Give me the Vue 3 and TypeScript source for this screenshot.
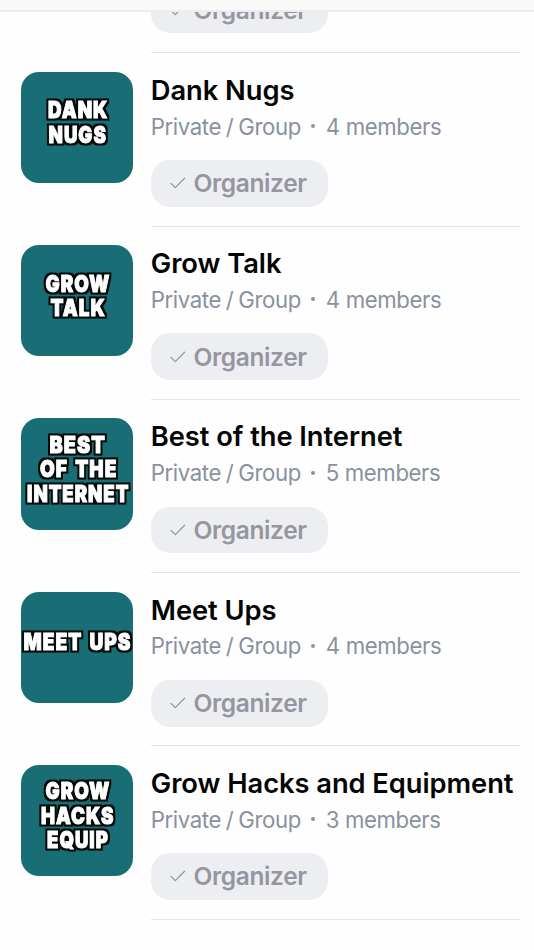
<script setup lang="ts">
interface LogoLine {
  text: string
  x: number
  y: number
  width: number
}
interface Group {
  name: string
  members: number
  logo: LogoLine[]
}

const groups: Group[] = [
  {
    name: 'Dank Nugs',
    members: 4,
    logo: [
      { text: 'DANK', x: 27, y: 46.2, width: 60 },
      { text: 'NUGS', x: 27.5, y: 70.4, width: 58 },
    ],
  },
  {
    name: 'Grow Talk',
    members: 4,
    logo: [
      { text: 'GROW', x: 24.5, y: 46.7, width: 64.5 },
      { text: 'TALK', x: 29.5, y: 70.9, width: 55 },
    ],
  },
  {
    name: 'Best of the Internet',
    members: 5,
    logo: [
      { text: 'BEST', x: 28.5, y: 34.7, width: 56 },
      { text: 'OF THE', x: 19, y: 59, width: 77 },
      { text: 'INTERNET', x: 6, y: 83.3, width: 102 },
    ],
  },
  {
    name: 'Meet Ups',
    members: 4,
    logo: [{ text: 'MEET UPS', x: 2.6, y: 58.2, width: 107.5 }],
  },
  {
    name: 'Grow Hacks and Equipment',
    members: 3,
    logo: [
      { text: 'GROW', x: 24.5, y: 34.2, width: 64.5 },
      { text: 'HACKS', x: 20, y: 58.5, width: 73 },
      { text: 'EQUIP', x: 26, y: 82.5, width: 61.5 },
    ],
  },
]
</script>

<template>
  <main class="screen">
    <header class="topbar"></header>
    <div class="partial">
      <div class="pill">
        <svg class="check" viewBox="0 0 16 12"><path d="M1 6.4 5.3 10.6 14.6 1.2" /></svg>
        <span>Organizer</span>
      </div>
    </div>
    <section v-for="(group, index) in groups" :key="group.name" class="row">
      <svg class="logo" viewBox="0 0 111 111">
        <filter :id="`outline-${index}`" x="-10%" y="-20%" width="120%" height="140%" color-interpolation-filters="sRGB">
          <feMorphology in="SourceAlpha" operator="dilate" radius="2" result="grown" />
          <feFlood flood-color="#050808" />
          <feComposite in2="grown" operator="in" result="edge" />
          <feMerge>
            <feMergeNode in="edge" />
            <feMergeNode in="SourceGraphic" />
          </feMerge>
        </filter>
        <g :filter="`url(#outline-${index})`">
          <text
            v-for="line in group.logo"
            :key="line.text"
            :x="line.x"
            :y="line.y"
            :textLength="line.width"
            lengthAdjust="spacingAndGlyphs"
          >{{ line.text }}</text>
        </g>
      </svg>
      <div class="info">
        <h2>{{ group.name }}</h2>
        <p class="meta">
          <span class="kind">Private / Group</span><i class="dot"></i><span>{{ group.members }} members</span>
        </p>
        <div class="pill">
          <svg class="check" viewBox="0 0 16 12"><path d="M1 6.4 5.3 10.6 14.6 1.2" /></svg>
          <span>Organizer</span>
        </div>
      </div>
    </section>
  </main>
</template>

<style>
body {
  background: #fefefe;
}
</style>

<style scoped>
.screen {
  width: 534px;
  height: 950px;
  overflow: hidden;
  box-sizing: border-box;
  font-family: Inter, 'Liberation Sans', sans-serif;
  display: flex;
  flex-direction: column;
}
.topbar {
  height: 12px;
  flex: none;
  box-sizing: border-box;
  background: #f9f9f9;
  border-bottom: 2px solid #ededed;
}
.partial {
  flex: none;
  height: 41.25px;
  margin: 0 14px 0 150.8px;
  box-sizing: border-box;
  border-bottom: 1px solid #e5e5e6;
  overflow: hidden;
  display: flex;
  flex-direction: column;
  justify-content: flex-end;
  padding-bottom: 19px;
}
.row {
  flex: none;
  height: 173.25px;
  display: flex;
  box-sizing: border-box;
  padding: 18.5px 14px 0 21.4px;
}
.logo {
  flex: none;
  width: 111.4px;
  height: 111.4px;
  border-radius: 18px;
  background: #196e75;
}
.logo text {
  font-family: Inter, sans-serif;
  font-weight: 900;
  font-size: 23px;
  letter-spacing: 1.2px;
  word-spacing: 3px;
  fill: #fff;
  stroke: #fff;
  stroke-width: 1px;
}
.info {
  flex: 1;
  min-width: 0;
  margin-left: 18px;
  height: 154.75px;
  box-sizing: border-box;
  border-bottom: 1px solid #e5e5e6;
}
h2 {
  margin: 0;
  font-size: 27.3px;
  line-height: 37px;
  font-weight: 600;
  letter-spacing: -0.05px;
  color: #050505;
  white-space: nowrap;
}
.meta {
  margin: 0;
  height: 34.5px;
  display: flex;
  align-items: center;
  font-size: 22.2px;
  letter-spacing: -0.4px;
  color: #8991a0;
  white-space: nowrap;
}
.kind {
  word-spacing: -1px;
}
.dot {
  width: 4px;
  height: 4px;
  border-radius: 50%;
  background: #8991a0;
  margin: 0 11px 0 10px;
}
.pill {
  flex: none;
  width: 177px;
  height: 46.75px;
  margin-top: 16.75px;
  box-sizing: border-box;
  border-radius: 19px;
  background: #edeef2;
  display: flex;
  align-items: center;
  padding-left: 19.3px;
  font-size: 24.5px;
  font-weight: 600;
  letter-spacing: -0.38px;
  color: #9696a0;
}
.check {
  width: 16px;
  height: 12px;
  margin-right: 7.5px;
  fill: none;
  stroke: #9696a0;
  stroke-width: 1.3;
  stroke-linecap: round;
  stroke-linejoin: round;
}
</style>
